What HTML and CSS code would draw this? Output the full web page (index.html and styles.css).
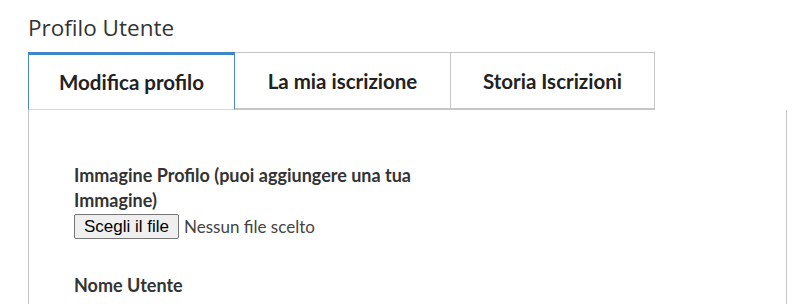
FILE: index.html
```html
<!DOCTYPE html>
<html>
<head>
    <meta charset="UTF-8">
    <title>Profilo Utente</title>
    <link rel="stylesheet" href="styles.css">
</head>
<body>
<div class="page">
    <h2 class="title">Profilo Utente</h2>

    <ul class="tabs">
        <li class="tab tab-edit active">Modifica profilo</li>
        <li class="tab tab-sub">La mia iscrizione</li>
        <li class="tab tab-history">Storia Iscrizioni</li>
    </ul>

    <div class="panel">
        <form class="profile-form">
            <div class="field">
                <label class="field-label" for="avatar">Immagine Profilo (puoi aggiungere una tua Immagine)</label>
                <div class="file-input">
                    <input type="file" id="avatar" name="avatar">
                    <label class="file-btn" for="avatar">Scegli il file</label>
                    <span class="file-name">Nessun file scelto</span>
                </div>
            </div>
            <div class="field">
                <label class="field-label" for="username">Nome Utente</label>
            </div>
        </form>
    </div>
</div>
</body>
</html>
```

FILE: styles.css
```css
body {
    margin: 0;
    font-family: Lato, "Open Sans", sans-serif;
    color: #333;
    background-color: #fff;
    overflow: hidden;
}
.page {
    padding: 0 17px 0 28px;
}
.title {
    margin: 0;
    padding-top: 14px;
    height: 38px;
    font-family: "Open Sans", sans-serif;
    font-size: 22.5px;
    font-weight: 400;
    line-height: 28px;
    color: #333;
}
.tabs {
    display: flex;
    list-style: none;
    margin: 0;
    padding: 0;
}
.tab {
    box-sizing: border-box;
    height: 58px;
    line-height: 57px;
    text-align: center;
    font-size: 20.5px;
    font-weight: 700;
    color: #222;
    border: 1px solid #c6c6c6;
    border-left: none;
    border-bottom-width: 2px;
}
.tab-edit {
    width: 207px;
}
.tab-sub {
    width: 216px;
}
.tab-history {
    width: 204px;
}
.tab.active {
    border: 1px solid #4a8ac4;
    border-top: 3px solid #3d87c9;
    border-bottom: 1px solid #d8d8d8;
    line-height: 55px;
}
.panel {
    border: 1px solid #c6c6c6;
    border-top: none;
    height: 141px;
    padding: 53px 45px 0;
}
.field {
    width: 365px;
    margin-bottom: 34px;
}
.field-label {
    display: block;
    font-size: 18px;
    font-weight: 700;
    line-height: 25px;
    color: #333;
}
.file-input {
    display: flex;
    align-items: center;
    margin-top: 1px;
}
.file-input input {
    display: none;
}
.file-btn {
    box-sizing: border-box;
    height: 25px;
    line-height: 23px;
    padding: 0 9px;
    font-family: "Liberation Sans", Arial, sans-serif;
    font-size: 17px;
    color: #000;
    background-color: #efefef;
    border: 1px solid #767676;
    border-radius: 2px;
}
.file-name {
    margin-left: 5px;
    font-size: 17px;
    color: #444;
}
```
